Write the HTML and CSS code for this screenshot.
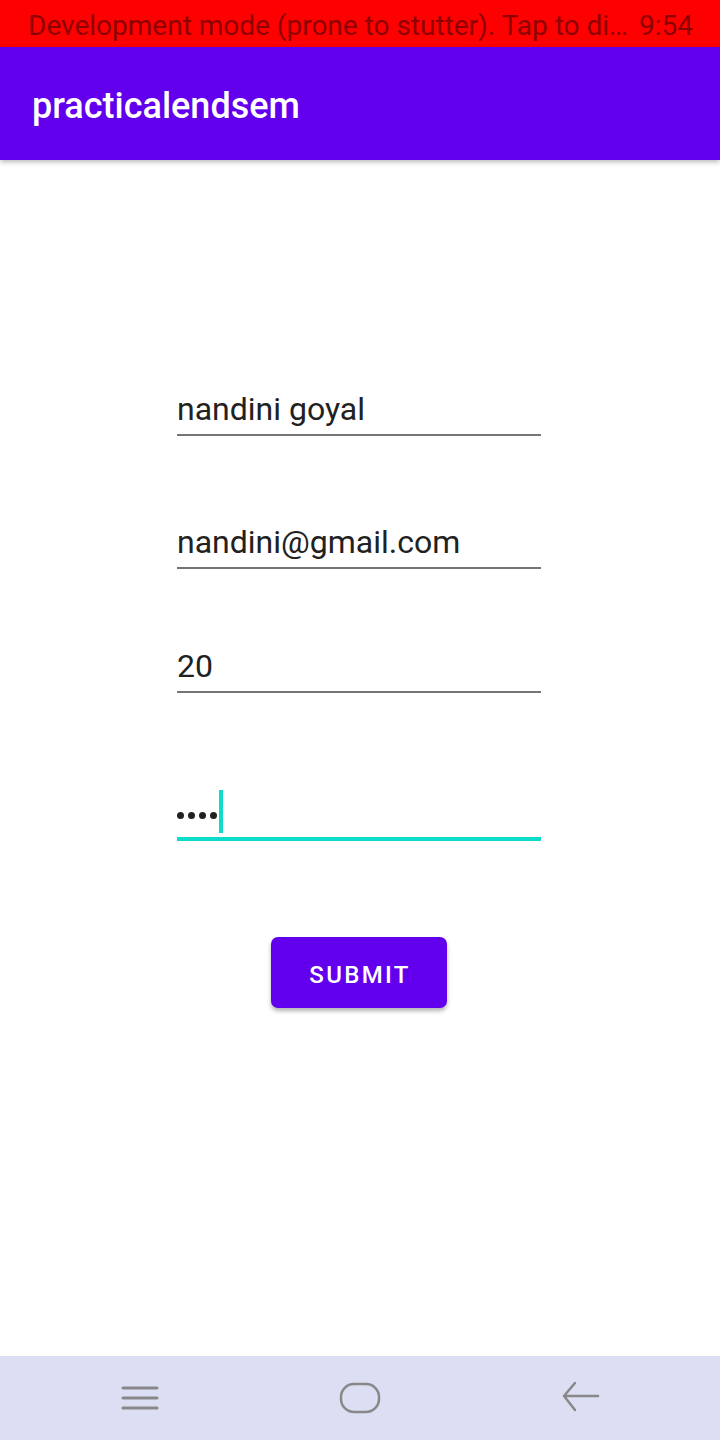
FILE: index.html
```html
<!DOCTYPE html>
<html>
<head>
<meta charset="utf-8">
<link rel="stylesheet" href="styles.css">
</head>
<body>
<div class="screen">
  <div class="status">
    <span class="status-text">Development mode (prone to stutter). Tap to di…</span>
    <span class="status-time">9:54</span>
  </div>
  <div class="appbar">practicalendsem</div>
  <main class="content">
    <div class="form">
      <div class="field f1"><span class="val">nandini goyal</span></div>
      <div class="field f2"><span class="val">nandini@gmail.com</span></div>
      <div class="field f3"><span class="val">20</span></div>
      <div class="field f4 focused"><span class="dots"><i></i><i></i><i></i><i></i></span><span class="cursor"></span></div>
      <button class="submit">SUBMIT</button>
    </div>
  </main>
  <div class="navbar">
    <svg class="nav-icon" width="40" height="40" viewBox="0 0 40 40"><path d="M3 10h34M3 20h34M3 30h34" stroke="#888" stroke-width="3" stroke-linecap="round" fill="none"/></svg>
    <svg class="nav-icon" width="44" height="34" viewBox="0 0 44 34"><rect x="3" y="3" width="38" height="28" rx="13" ry="13" stroke="#888" stroke-width="2.5" fill="none"/></svg>
    <svg class="nav-icon" width="40" height="34" viewBox="0 0 40 34"><path d="M38 15H4M15 2L4 15l11 14" stroke="#888" stroke-width="2.5" stroke-linecap="round" stroke-linejoin="round" fill="none"/></svg>
  </div>
</div>
</body>
</html>
```
FILE: styles.css
```css
html, body {
  margin: 0;
  padding: 0;
  background: #ffffff;
}
.screen {
  width: 720px;
  height: 1440px;
  display: flex;
  flex-direction: column;
  font-family: Roboto, "Liberation Sans", sans-serif;
  overflow: hidden;
}
.status {
  height: 47px;
  background: #ff0000;
  display: flex;
  align-items: center;
  justify-content: space-between;
  padding: 3px 27px 0 28px;
  font-size: 28px;
  color: #8e0000;
  box-sizing: border-box;
}
.appbar {
  height: 113px;
  background: #6200ee;
  color: #ffffff;
  font-size: 36px;
  font-weight: 500;
  display: flex;
  align-items: center;
  padding-left: 32px;
  padding-top: 5px;
  box-sizing: border-box;
  box-shadow: 0 2px 5px rgba(0,0,0,0.28);
  position: relative;
  z-index: 1;
}
.content {
  flex: 1;
  display: flex;
  justify-content: center;
  padding-right: 2px;
}
.form {
  width: 364px;
  display: flex;
  flex-direction: column;
  padding-top: 220px;
}
.field {
  border-bottom: 2px solid #757575;
  display: flex;
  align-items: flex-end;
  height: 56px;
  padding-bottom: 9px;
  box-sizing: border-box;
  font-size: 32px;
  color: #212121;
}
.f2 { margin-top: 75px; height: 58px; }
.f3 { margin-top: 68px; }
.f4 { margin-top: 91px; height: 57px; }
.focused {
  border-bottom: 4px solid #0ddccc;
  padding-bottom: 4px;
}
.val { line-height: 1; }
.dots {
  display: flex;
  gap: 4px;
  padding-bottom: 14px;
}
.dots i {
  display: block;
  width: 7px;
  height: 7px;
  border-radius: 50%;
  background: #212121;
}
.cursor {
  width: 4px;
  height: 43px;
  background: #0ddccc;
  margin-left: 2px;
}
.submit {
  align-self: center;
  margin-top: 96px;
  width: 176px;
  height: 71px;
  background: #6200ee;
  color: #ffffff;
  border: none;
  border-radius: 7px;
  font-family: Roboto, "Liberation Sans", sans-serif;
  font-size: 24px;
  font-weight: 500;
  letter-spacing: 2.3px;
  padding: 4px 0 0 2px;
  box-shadow: 0 3px 4px rgba(0,0,0,0.3);
}
.navbar {
  height: 84px;
  background: #dcdff4;
  display: flex;
  align-items: center;
  justify-content: space-between;
  padding: 0 120px;
}
.nav-icon { display: block; }
```
